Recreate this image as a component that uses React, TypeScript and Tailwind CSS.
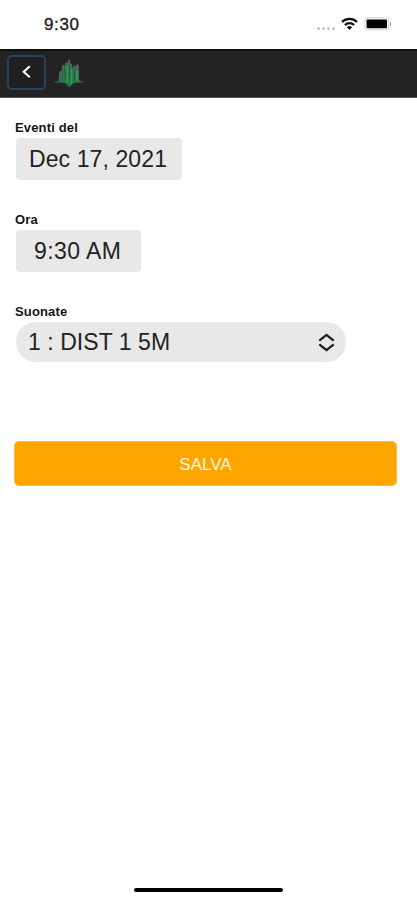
import type { ReactNode } from 'react'

function StatusBar() {
  return (
    <div className="flex h-[49px] items-start justify-between pl-[44px] pr-[25px]">
      <span className="mt-[15px] text-[17px] leading-[19px] tracking-[0.6px] text-[#1c1c1c] [-webkit-text-stroke:0.35px_#1c1c1c]">
        9:30
      </span>
      <div className="mt-[17px] flex items-start">
        <div className="mt-[10px] mr-[6px] flex gap-[2px]">
          {[0, 1, 2, 3].map((i) => (
            <span key={i} className="h-[3px] w-[3px] rounded-full bg-[#c4c4c4]" />
          ))}
        </div>
        <svg width="17" height="14" viewBox="0 0 17 14" fill="none" stroke="#111" strokeWidth="2.2">
          <path d="M1 4.9a10.7 10.7 0 0 1 15 0" />
          <path d="M3.9 8a6.7 6.7 0 0 1 9.2 0" />
          <path d="M8.5 12.9 5.9 10.3a3.8 3.8 0 0 1 5.2 0z" fill="#111" stroke="none" />
        </svg>
        <svg className="ml-[6px]" width="28" height="14" viewBox="0 0 28 14">
          <rect x="0.8" y="0.9" width="24" height="12" rx="3" fill="#fff" stroke="#cfcfcf" />
          <rect x="2.5" y="2.5" width="20.5" height="8.8" rx="1" fill="#000" />
          <path d="M26 4.7c1.7.7 1.7 3.7 0 4.4z" fill="#999" />
        </svg>
      </div>
    </div>
  )
}

function Logo() {
  return (
    <svg width="30" height="29" viewBox="0 0 30 29">
      <path d="M0.5 23h29M4 21l4-1.5M22 20l4 1.5" stroke="#4b5751" strokeWidth="1.2" />
      <path
        d="M5 22v-9l3-2V7l1.5-1.5L11 7V4.5l1.5-1.5L14 4V1l1-1 1 1v3l2 1v5l2-4 2 2V6l1.5-1L25 7v15z"
        fill="#5c5b5c"
      />
      <path
        d="M3 23l3-2v-5l3-2V9l1.5-1L12 9V6l1.5-2L15 5v6l2-5 1.5 3v2L20 9l1 3 1.5-3L24 11v10l4 2-8 1-4.5 4-4.5-4z"
        fill="#257947"
      />
      <path d="M13.5 7v17M17.5 10v15M23 12v10" stroke="#35985a" strokeWidth="1.5" />
      <path d="M11 10v10M15.5 7v13M20.5 11v9" stroke="#315440" strokeWidth="1" />
    </svg>
  )
}

function Header() {
  return (
    <header className="flex h-[49px] items-start border-t-2 border-b border-t-[#101010] border-b-[#555] bg-[#232323] pl-[7px]">
      <button
        type="button"
        className="mt-[4px] flex h-[35px] w-[39px] items-center justify-center rounded-[5px] border-2 border-[#24435f] bg-[#202020]"
      >
        <svg className="-mt-[2px]" width="11" height="14" viewBox="0 0 11 14" fill="none" stroke="#fff" strokeWidth="2.1">
          <path d="M8.8 1.2 2.7 6.7l6.1 5.5" />
        </svg>
      </button>
      <div className="mt-[8px] ml-[8px]">
        <Logo />
      </div>
    </header>
  )
}

function Field({ label, children }: { label: string; children: ReactNode }) {
  return (
    <div className="flex h-[92px] flex-col items-start">
      <span className="mt-px mb-[2px] ml-[-1px] text-[13px] leading-[16px] font-bold tracking-[0.15px] text-[#151515]">
        {label}
      </span>
      {children}
    </div>
  )
}

export default function App() {
  return (
    <div className="flex h-[900px] w-[417px] flex-col bg-white font-['Liberation_Sans',Arial,sans-serif]">
      <StatusBar />
      <Header />

      <main className="flex-1 pt-[21px] pr-[20px] pl-[14px]">
        <div className="pl-[2px]">
          <Field label="Eventi del">
            <div className="flex h-[42px] w-[166px] items-center rounded-[4px] bg-[#e8e8e8] pl-[13px] text-[23px] tracking-[0.1px] text-[#222]">
              Dec 17, 2021
            </div>
          </Field>
          <Field label="Ora">
            <div className="flex h-[42px] w-[125px] items-center rounded-[4px] bg-[#e8e8e8] pl-[18px] text-[23px] tracking-[0.4px] text-[#222]">
              9:30 AM
            </div>
          </Field>
          <Field label="Suonate">
            <div className="flex h-[40px] w-[330px] items-center justify-between rounded-full bg-[#e8e8e8] pr-[11px] pl-[12px] text-[23px] tracking-[0.05px] text-[#222]">
              <span>1 : DIST 1 5M</span>
              <svg width="17" height="19" viewBox="0 0 17 19" fill="none" stroke="#1c1c1c" strokeWidth="2.2">
                <path d="M1.3 7.6 8.5 1.8l7.2 5.8M1.3 11.4 8.5 17.2l7.2-5.8" />
              </svg>
            </div>
          </Field>
        </div>
        <button
          type="button"
          className="mt-[46px] flex h-[45px] w-full items-center justify-center rounded-[5px] border border-[#f8b850] bg-[#ffa500] pt-[2px] text-[17px] text-[#fff5e2]"
        >
          SALVA
        </button>
      </main>

      <div className="mb-[8px] h-[4px] w-[149px] self-center rounded-full bg-black" />
    </div>
  )
}
